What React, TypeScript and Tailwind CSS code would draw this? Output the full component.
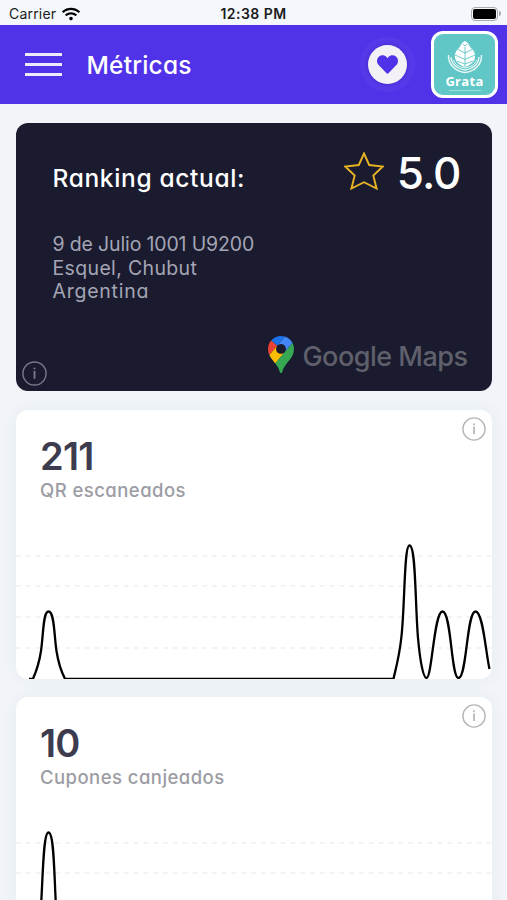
import React from 'react';
import { FaHeart, FaWifi } from 'react-icons/fa';

const GRID_LINES = [12, 42, 73, 104];

const SCANS_PATH =
  'M13 134.8 H17 C20 128 23 120 25 107 C27.500 90 27 67.5 32.5 67.5 C38.5 67.5 38 91 40.500 107 C42.5 120 46 129 49 134.8 H377.5 C379.500 126 383.500 112 385.500 92 C389 60 388 1.5 393.5 1.5 C400 1.5 399 58 402 94 C404 116 407 134 410.5 134 C416 134 418 67.5 426.5 67.5 C435.5 67.5 435 134 442.5 134 C451 134 450.5 67.5 459.5 67.5 C467 67.5 469.5 107 473.5 125';

const COUPONS_PATH =
  'M13 134.8 H17 C20 126 22.5 112 24.5 84 C27 47 27 1.5 32.5 1.5 C38.5 1.5 38 47 40.5 84 C42.5 112 46 127 49 134.8 H476';

const InfoIcon: React.FC<{ className?: string }> = ({ className }) => (
  <svg viewBox="0 0 24 24" className={className} fill="none" stroke="currentColor">
    <circle cx="12" cy="12" r="11.1" strokeWidth="1.4" />
    <path d="M12 9.5V17" strokeWidth="1.8" />
    <circle cx="12" cy="7.2" r="1" fill="currentColor" stroke="none" />
  </svg>
);

const MapsPin: React.FC = () => (
  <svg viewBox="0 0 92.3 132.3" className="h-[37px] w-[26px]">
    <path fill="#1a73e8" d="M60.2 2.2C55.8.8 51 0 46.1 0 32 0 19.3 6.4 10.8 16.5l21.8 18.3L60.2 2.2z" />
    <path fill="#ea4335" d="M10.8 16.5C4.1 24.5 0 34.9 0 46.1c0 8.7 1.7 15.7 4.6 22l28-33.3-21.8-18.3z" />
    <path fill="#4285f4" d="M46.2 28.5c9.8 0 17.7 7.9 17.7 17.7 0 4.3-1.6 8.3-4.2 11.4 0 0 13.9-16.6 27.5-32.7-5.6-10.8-15.3-19-27-22.7L32.6 34.8c3.3-3.8 8.1-6.3 13.6-6.3z" />
    <path fill="#fbbc04" d="M46.2 63.8c-9.8 0-17.7-7.9-17.7-17.7 0-4.3 1.5-8.3 4.1-11.3l-28 33.3c4.8 10.6 12.8 19.2 21 29.9l34.1-40.5c-3.3 3.9-8.1 6.3-13.5 6.3z" />
    <path fill="#34a853" d="M59.1 109.2c15.4-24.1 33.3-35 33.3-63 0-7.7-1.9-14.9-5.2-21.3L25.6 98c2.6 3.4 5.3 7.3 7.9 11.3 9.4 14.5 6.8 23.1 12.8 23.1s3.4-8.7 12.8-23.2z" />
  </svg>
);

const GrataLogo: React.FC = () => (
  <div className="flex h-[67px] w-[67px] flex-col items-center rounded-[12px] border-[3px] border-white bg-[#60c6c6] pt-1.5 text-white">
    <svg viewBox="0 0 36 34" className="h-[34px] w-9 shrink-0" fill="none" stroke="currentColor">
      <path
        d="M18 1C14 3 14 6 11.5 8.5C8 12 7.500 15 8 18C9 23 14 25.500 18 27C22 25.500 27 23 28 18C28.500 15 28 12 24.500 8.500C22 6 22 3 18 1Z"
        fill="currentColor"
        stroke="none"
      />
      <path
        d="M18 7V27M11 9.500L18 13L25 9.500M8 15L18 19.500L28 15M10 21L18 24L26 21M16 4L18 6L20 4"
        stroke="#60c6c6"
        strokeWidth="0.900"
      />
      <path d="M1.500 15C1 24 8 31.500 18 32.500C28 31.500 35 24 34.500 15" strokeWidth="1.500" strokeOpacity="0.85" />
      <path d="M4 17C4.500 24 10 28.500 18 30C26 28.500 31.500 24 32 17" strokeWidth="1.400" strokeOpacity="0.85" />
      <path d="M6.500 20C8 24.500 12 27 18 27.800C24 27 28 24.500 29.500 20" strokeWidth="1" strokeOpacity="0.85" />
    </svg>
    <span className="mt-px font-['Open_Sans',sans-serif] text-[13px] leading-[13px] font-bold tracking-[0.3px]">Grata</span>
    <span className="mt-[2px] h-px w-8 bg-white/40" />
  </div>
);

const StatusBar: React.FC = () => (
  <div className="grid h-[25px] grid-cols-3 items-center bg-[#f4f7fb] pt-[2px] text-[14px] text-[#1b1c20]">
    <div className="flex items-center gap-[6px] pl-[9px]">
      <span className="tracking-[0.2px]">Carrier</span>
      <FaWifi className="h-[18px] w-[18px] text-black" />
    </div>
    <span className="text-center font-semibold tracking-[0.45px]">12:38 PM</span>
    <div className="flex items-center justify-end pr-[6px]">
      <span className="h-[14px] w-[27px] rounded-[4px] border-[1.500px] border-[#a9aaae] p-px">
        <span className="block h-full w-full rounded-[2px] bg-black" />
      </span>
      <span className="ml-px h-[5px] w-[2px] rounded-r-full bg-[#a9aaae]" />
    </div>
  </div>
);

const Header: React.FC = () => (
  <header className="flex h-[79px] items-center bg-[#5033e8] pr-[9px] pl-[25px] text-white">
    <div className="flex w-[37px] flex-col gap-[7.500px]">
      <span className="h-[2.500px] bg-[#eeeafd]" />
      <span className="h-[2.500px] bg-[#eeeafd]" />
      <span className="h-[2.500px] bg-[#eeeafd]" />
    </div>
    <h1 className="ml-[24.500px] text-[24.500px] leading-8 font-medium tracking-[0.2px]">Métricas</h1>
    <div className="ml-auto flex h-[55px] w-[55px] items-center justify-center rounded-full bg-[#563aea]">
      <div className="flex h-[39px] w-[39px] items-center justify-center rounded-full bg-[#f3f1f5] shadow-[0_0_4px_rgba(40,20,160,0.5)]">
        <FaHeart className="h-[21px] w-[21px] text-[#5033e8]" />
      </div>
    </div>
    <div className="ml-[16px]">
      <GrataLogo />
    </div>
  </header>
);

const RankingCard: React.FC = () => (
  <section className="relative h-[268px] rounded-[12px] bg-[#1a1b2e] pr-[24px] pl-[37px] text-white">
    <div className="flex h-[100px] items-center">
      <h2 className="mt-[9px] text-[24.500px] leading-8 font-medium tracking-[0.65px]">Ranking actual:</h2>
      <svg viewBox="0 0 40 38" className="mb-[4px] ml-auto h-[38px] w-10" fill="none" stroke="#e6b325" strokeWidth="1.900" strokeLinejoin="miter">
        <path d="M20 1.500L25.200 13L38.800 14.500L29.300 23.500L32.600 36.500L20 30.200L7.400 36.500L10.700 23.500L1.200 14.500L14.800 13Z" />
      </svg>
      <span className="mr-[7px] ml-[13px] text-[44px] leading-[50px] font-medium tracking-[-1px]">5.0</span>
    </div>
    <div className="mt-[10px] flex flex-col text-[19.500px] leading-[23.500px] text-[#a4a5b5]">
      <span className="tracking-[-0.15px]">9 de Julio 1001 U9200</span>
      <span className="tracking-[0.35px]">Esquel, Chubut</span>
      <span className="tracking-[0.75px]">Argentina</span>
    </div>
    <div className="mt-[32px] flex items-center justify-end gap-[8px] text-[#5f606b]">
      <MapsPin />
      <span className="mt-[5px] text-[27px] leading-8 font-medium tracking-[-0.500px] [font-feature-settings:normal]">Google Maps</span>
    </div>
    <InfoIcon className="absolute bottom-[5px] left-[6px] h-[25px] w-[25px] text-[#77788a]" />
  </section>
);

interface MetricCardProps {
  value: number;
  label: string;
  path: string;
}

const MetricCard: React.FC<MetricCardProps> = ({ value, label, path }) => (
  <section className="relative flex h-[269px] shrink-0 flex-col overflow-hidden rounded-[12px] bg-white shadow-[0_0_18px_rgba(40,50,80,0.05)]">
    <div className="pt-[25px] pl-[24.500px]">
      <p className="text-[38px] leading-[42px] font-semibold tracking-[-0.800px] text-[#3d3c4f]">{value}</p>
      <p className="mt-px text-[18.500px] leading-6 font-medium tracking-[0.45px] text-[#9c9ca4]">{label}</p>
    </div>
    <svg viewBox="0 0 476 135" className="mt-auto h-[135px] w-full" fill="none">
      {GRID_LINES.map((y) => (
        <line key={y} x1="0" x2="476" y1={y} y2={y} stroke="#f0f0f2" strokeWidth="1.500" strokeDasharray="4.900 4.900" />
      ))}
      <path d={path} stroke="#000" strokeWidth="2.300" strokeLinejoin="round" />
    </svg>
    <InfoIcon className="absolute top-[7px] right-[6px] h-[24px] w-[24px] text-[#b6b6ba]" />
  </section>
);

const App: React.FC = () => {
  return (
    <div className="h-[900px] w-full overflow-hidden bg-[#f1f5f9] font-['Inter',sans-serif]">
      <StatusBar />
      {/* cv11 gives the single-storey "a" */}
      <div className="[font-feature-settings:'cv11']">
        <Header />
        <main className="flex flex-col px-[15.500px] pt-[19px]">
          <RankingCard />
          <div className="mt-[19px] flex flex-col gap-[18px]">
            <MetricCard value={211} label="QR escaneados" path={SCANS_PATH} />
            <MetricCard value={10} label="Cupones canjeados" path={COUPONS_PATH} />
          </div>
        </main>
      </div>
    </div>
  );
};

export default App;
